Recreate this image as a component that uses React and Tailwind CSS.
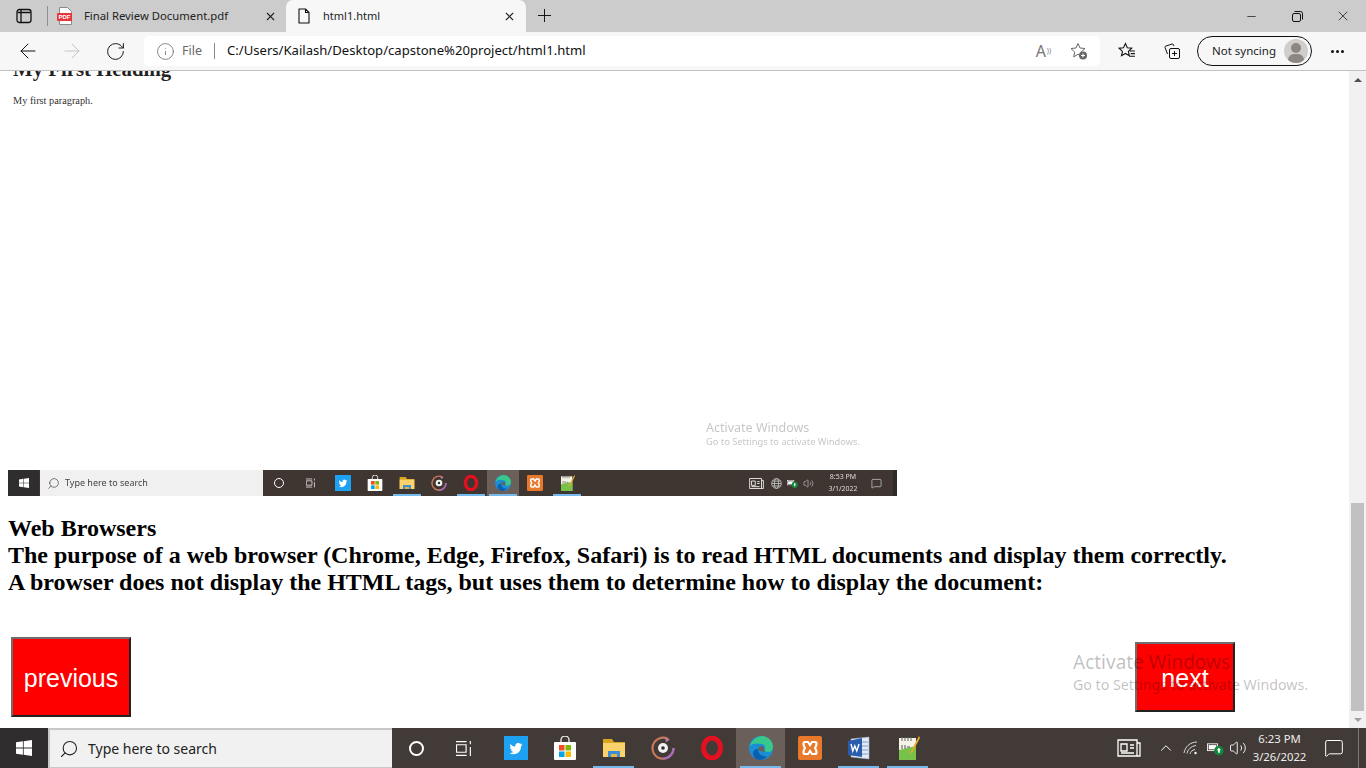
import { ArrowLeft, ArrowRight, RotateCw, Info, X, Plus, Minus, Search, ChevronUp, MessageSquare, Volume2 } from 'lucide-react';

const ui = { fontFamily: '"Noto Sans", "Open Sans", sans-serif' };

// taskbar app icons, all drawn on a 24 box so both taskbars can share them
const Twitter = ({ s }) => (
  <svg width={s} height={s} viewBox="0 0 24 24">
    <rect width="24" height="24" fill="#1da1f2" />
    <path d="M18 8.200c-.5.2-1 .4-1.500.4.5-.3 1-.8 1.200-1.400-.5.300-1.100.5-1.700.6a2.700 2.700 0 0 0-4.600 2.500C9.600 10.700 7.700 9.700 6.400 8c-.7 1.200-.4 2.800.8 3.600-.4 0-.8-.1-1.200-.3 0 1.300.9 2.400 2.200 2.700-.4.100-.8.100-1.200 0 .3 1.100 1.300 1.900 2.500 1.900-1.200.9-2.700 1.300-4.100 1.100 4.900 3 11.700.2 11.600-6.800.5-.4 1-.9 1.400-1.400z" fill="#fff" />
  </svg>
);

const Store = ({ s }) => (
  <svg width={s} height={s} viewBox="0 0 24 24">
    <path d="M8 6V4a4 4 0 0 1 8 0v2" fill="none" stroke="#e8e8e8" strokeWidth="1.400" />
    <rect x="1" y="6" width="22" height="18" rx="1" fill="#fff" />
    <rect x="6" y="9" width="5.500" height="5.500" fill="#f25022" />
    <rect x="12.500" y="9" width="5.500" height="5.500" fill="#7fba00" />
    <rect x="6" y="15.500" width="5.500" height="5.500" fill="#00a4ef" />
    <rect x="12.500" y="15.500" width="5.500" height="5.500" fill="#ffb900" />
  </svg>
);

const Folder = ({ s }) => (
  <svg width={s} height={s} viewBox="0 0 24 24">
    <path d="M1 3h9l2 3h11v15H1z" fill="#d9a520" />
    <path d="M1 7h22v14H1z" fill="#fbd36a" />
    <path d="M6 21v-6h12v6h-3v-3H9v3z" fill="#3a8fd6" />
    <rect x="9" y="18" width="6" height="3" fill="#e9b43c" />
  </svg>
);

const Groove = ({ s }) => (
  <svg width={s} height={s} viewBox="0 0 24 24">
    <path d="M17 3A10.500 10.500 0 1 0 22.500 12" fill="none" stroke="#c9785a" strokeWidth="2.200" />
    <path d="M22.500 12A10.500 10.500 0 0 1 12 22.500" fill="none" stroke="#a66cc0" strokeWidth="2.200" />
    <path d="M14 1l5 2.500-4 3z" fill="#b77a9a" />
    <circle cx="12" cy="12" r="5" fill="#f2f2f2" />
    <circle cx="12" cy="12" r="1.800" fill="#2f2a28" />
  </svg>
);

const Opera = ({ s }) => (
  <svg width={s} height={s} viewBox="0 0 24 24">
    <ellipse cx="12" cy="12" rx="8.500" ry="10" fill="none" stroke="#e3101f" strokeWidth="5" />
  </svg>
);

const Edge = ({ s }) => (
  <svg width={s} height={s} viewBox="0 0 24 24">
    <circle cx="12" cy="12" r="12" fill="#1b8fd6" />
    <path d="M1 10C3 3 9 0 13 0c6 0 11 5 11 11 0 3-2 5-5 5-2 0-4-1-4-2 2-1 2-5-2-6C8 7 3 7 1 10z" fill="#37c98b" />
    <path d="M9 13c0 5 4 8 9 7-2 2.500-4 4-7 4-5 0-7-4-7-7 0-2 2-4 5-4z" fill="#0c5fae" />
    <path d="M10 11c2-2 5-1 5 2 0 1 1 2 2 2-1 .500-6 1-7.500-1-.4-1 0-2 .500-3z" fill="#6b5f5a" />
  </svg>
);

const Xampp = ({ s }) => (
  <svg width={s} height={s} viewBox="0 0 24 24">
    <rect width="24" height="24" rx="2" fill="#e8792b" />
    <path d="M7 6h3l2 3 2-3h3c2 0 2 3 0 6 2 3 2 6 0 6h-3l-2-3-2 3H7c-2 0-2-3 0-6-2-3-2-6 0-6z" fill="none" stroke="#fff" strokeWidth="2.200" />
  </svg>
);

const Word = ({ s }) => (
  <svg width={s} height={s} viewBox="0 0 24 24">
    <path d="M4 3l18-2v22L4 21z" fill="#e4eaf4" stroke="#9db0d0" strokeWidth=".6" />
    <path d="M15 6h6M15 10h6M15 14h6M15 18h6" stroke="#7a9ad0" strokeWidth="1" />
    <path d="M1 5l14-3v19L1 19z" fill="#2a5cae" />
    <path d="M4 8l1.800 7 2-5 2 5L12 8" fill="none" stroke="#fff" strokeWidth="1.400" />
  </svg>
);

const Notepad = ({ s }) => (
  <svg width={s} height={s} viewBox="0 0 24 24">
    <path d="M3 2h17v22H3z" fill="#f4f4e6" />
    <path d="M3 14l17-4v14H3z" fill="#79c24a" />
    <path d="M6 1v4M9 1v4M12 1v4M15 1v4" stroke="#666" strokeWidth="1" />
    <path d="M6 9v4M9 9v4M11 11h3" stroke="#555" strokeWidth="1" />
    <path d="M23 0l-8 15-1.500 3 3-2L24 2z" fill="#e8a92b" />
  </svg>
);

const WinLogo = ({ s }) => (
  <svg width={s} height={s} viewBox="0 0 16 16" fill="#fff">
    <path d="M0 2.300l6.900-1v6.300H0zM7.700 1.200L16 0v7.600H7.700zM0 8.400h6.900v6.300L0 13.700zM7.700 8.400H16V16l-8.300-1.200z" />
  </svg>
);

const TaskView = ({ s }) => (
  <svg width={s} height={s} viewBox="0 0 16 16" fill="none" stroke="#fff" strokeWidth="1.100">
    <path d="M0 1.500h10M0 14.500h10M.5 4.500h9v7h-9zM13.500 1v3M13.500 6.500v8.500" />
  </svg>
);

const News = ({ s }) => (
  <svg width={s} height={s} viewBox="0 0 24 24" fill="none" stroke="#fff" strokeWidth="1.300">
    <path d="M1 4h19v16H1zM20 7h3v13h-3M4 8h6v7H4zM13 9h4M13 12h4M4 17h13" />
  </svg>
);

const Wifi = ({ s }) => (
  <svg width={s} height={s} viewBox="0 0 16 16" fill="none" stroke="#ddd" strokeWidth="1">
    <path d="M1 13C2 7 7 2 14 2M4 13.500C4.500 10 8 6 13 5.500M7 14c.3-2 2-4 5-4.500" />
    <circle cx="12.500" cy="13" r="1.200" fill="#fff" stroke="none" />
  </svg>
);

const Battery = ({ s }) => (
  <svg width={s} height={s} viewBox="0 0 20 16">
    <rect x="0.500" y="2.500" width="12" height="8" fill="none" stroke="#fff" />
    <rect x="2" y="4" width="9" height="5" fill="#fff" />
    <circle cx="14" cy="10.500" r="5.500" fill="#10893e" />
    <path d="M14 7l2.500 3H15v3h-2v-3h-1.500z" fill="#fff" />
  </svg>
);

const Globe = ({ s }) => (
  <svg width={s} height={s} viewBox="0 0 16 16" fill="none" stroke="#ddd" strokeWidth="1">
    <circle cx="8" cy="8" r="7" />
    <ellipse cx="8" cy="8" rx="3" ry="7" />
    <path d="M1 8h14M2 4.500h12M2 11.500h12" />
  </svg>
);

function Cell({ size, active, bar, width, children }) {
  return (
    <div className={`relative h-full flex items-center justify-center shrink-0 ${active ? 'bg-[#6b5f5a]' : ''}`} style={{ width }}>
      {children}
      {bar && <div className="absolute bottom-0 h-[2px] bg-[#76b9ed]" style={{ left: (width - size * 1.700) / 2, width: size * 1.700 }} />}
    </div>
  );
}

function MiniTaskbar() {
  const apps = [
    [Twitter, false, false],
    [Store, false, false],
    [Folder, true, false],
    [Groove, false, false],
    [Opera, true, false],
    [Edge, true, true],
    [Xampp, false, false],
    [Notepad, true, false],
  ];
  return (
    <div className="h-[26px] w-[889px] flex items-center bg-[#3f3631] text-white blur-[0.3px]" style={ui}>
      <div className="w-[31px] h-full bg-[#2f2d2d] flex items-center justify-center"><WinLogo s={10} /></div>
      <div className="w-[223px] h-full ml-[1px] bg-[#f0f0f0] flex items-center text-[#444] text-[9px] pl-[7px] gap-[5px]">
        <Search size={13} className="-scale-x-100" strokeWidth={1.300} />
        <span>Type here to search</span>
      </div>
      <Cell width={31}><div className="w-[10px] h-[10px] rounded-full border-[1.500px] border-white" /></Cell>
      <Cell width={33}><TaskView s={10} /></Cell>
      {apps.map(([Icon, bar, active], i) => (
        <Cell key={i} width={32} size={16} bar={bar} active={active}><Icon s={16} /></Cell>
      ))}
      <div className="flex-1" />
      <News s={15} />
      <div className="w-[7px]" />
      <Globe s={11} />
      <div className="w-[5px]" />
      <Battery s={11} />
      <div className="w-[5px]" />
      <Volume2 size={11} strokeWidth={1.200} color="#ddd" />
      <div className="w-[12px] flex-none" />
      <div className="text-[7px] leading-[12px] text-center text-[#ddd] w-[34px]">
        <div>8:53 PM</div>
        <div>3/1/2022</div>
      </div>
      <div className="w-[33px] flex items-center justify-center"><MessageSquare size={11} strokeWidth={1.200} /></div>
      <div className="w-[4px] h-full bg-[#2e2a27]" />
    </div>
  );
}

function Taskbar() {
  const apps = [
    [Twitter, 24, false, false],
    [Store, 24, false, false],
    [Folder, 24, true, false],
    [Groove, 24, false, false],
    [Opera, 24, false, false],
    [Edge, 24, true, true],
    [Xampp, 24, false, false],
    [Word, 24, true, false],
    [Notepad, 24, true, false],
  ];
  return (
    <div className="h-[40px] flex bg-[#423a36] text-white shrink-0" style={ui}>
      <div className="w-[48px] bg-[#2f2d2d] flex items-center justify-center"><WinLogo s={16} /></div>
      <div className="w-[344px] bg-[#f1f1f1] border-2 border-b-[1px] border-[#c8c8c8] border-r-0 flex items-center text-[#222] text-[14px] pl-[9px] gap-[9px]">
        <Search size={20} className="-scale-x-100" strokeWidth={1.300} />
        <span>Type here to search</span>
      </div>
      <Cell width={49}><div className="w-[15px] h-[15px] rounded-full border-2 border-white" /></Cell>
      <Cell width={50}><div className="mr-[4px]"><TaskView s={17} /></div></Cell>
      {apps.map(([Icon, s, bar, active], i) => (
        <Cell key={i} width={49} size={s} bar={bar} active={active}><Icon s={s} /></Cell>
      ))}
      <div className="flex-1" />
      <div className="w-[26px] flex items-center justify-center"><News s={24} /></div>
      <div className="w-[12px]" />
      <div className="w-[24px] flex items-center justify-center"><ChevronUp size={18} strokeWidth={1.300} /></div>
      <div className="w-[25px] flex items-center justify-center"><Wifi s={16} /></div>
      <div className="w-[24px] flex items-center justify-center"><Battery s={17} /></div>
      <div className="w-[22px] flex items-center justify-center"><Volume2 size={18} strokeWidth={1.200} /></div>
      <div className="w-[61px] text-center text-[11.300px] leading-[18px] pt-[2px] text-[#eee]">
        <div>6:23 PM</div>
        <div>3/26/2022</div>
      </div>
      <div className="w-[48px] flex items-center justify-center"><MessageSquare size={20} strokeWidth={1.200} /></div>
      <div className="w-[8px] border-l border-[#777]" />
    </div>
  );
}

const SidebarIcon = () => (
  <svg width="16" height="16" viewBox="0 0 16 16" fill="none" stroke="#111" strokeWidth="1.300">
    <rect x="1" y="1.500" width="14" height="13" rx="2.500" />
    <path d="M5 2v12" />
    <path d="M1.500 4.500h13" strokeWidth="1.500" />
  </svg>
);

const PdfIcon = () => (
  <svg width="16" height="18" viewBox="0 0 16 18">
    <path d="M2.500.500h8l4 4v13h-12z" fill="#fff" stroke="#8a8a8a" />
    <rect x="0" y="6" width="15" height="8" rx="1" fill="#e8343a" />
    <text x="7.500" y="12.300" fontSize="6" fontWeight="700" fill="#fff" textAnchor="middle" fontFamily="Liberation Sans">PDF</text>
  </svg>
);

const PageIcon = () => (
  <svg width="12" height="16" viewBox="0 0 12 16" fill="none" stroke="#111" strokeWidth="1.100">
    <path d="M1 1h6.500L11 4.500V15H1zM7.500 1v3.500H11" strokeLinejoin="round" />
  </svg>
);

function TabBar() {
  return (
    <div className="h-[32px] bg-[#cccccc] flex text-[11.300px] text-[#222] shrink-0" style={ui}>
      <div className="w-[47px] flex items-center justify-center pl-[1px]"><SidebarIcon /></div>
      <div className="w-px h-[20px] mt-[6px] bg-[#8e8e8e]" />
      <div className="w-[238px] flex items-center pl-[9px] pr-[9px]">
        <PdfIcon />
        <span className="ml-[11px] flex-1">Final Review Document.pdf</span>
        <X size={13} strokeWidth={2} color="#222" />
      </div>
      <div className="w-[240px] bg-[#f7f7f7] rounded-t-[7px] flex items-center pl-[12px] pr-[10px]">
        <PageIcon />
        <span className="ml-[13px] flex-1 text-[11px]">html1.html</span>
        <X size={13} strokeWidth={2} color="#222" />
      </div>
      <div className="w-[36px] flex items-center justify-center pb-[1px]"><Plus size={21} strokeWidth={1.100} color="#111" /></div>
      <div className="flex-1" />
      <div className="w-[46px] flex items-center justify-center"><Minus size={13} strokeWidth={1.300} color="#111" /></div>
      <div className="w-[46px] flex items-center justify-center">
        <svg width="11" height="11" viewBox="0 0 11 11" fill="none" stroke="#111">
          <rect x=".5" y="2.500" width="8" height="8" rx="1.500" />
          <path d="M2.500 .5h6a2 2 0 0 1 2 2v6" />
        </svg>
      </div>
      <div className="w-[46px] flex items-center justify-center"><X size={16} strokeWidth={1.100} color="#111" /></div>
    </div>
  );
}

function Toolbar() {
  return (
    <div className="h-[39px] bg-[#f7f7f7] border-b border-[#c2c2c2] flex items-start text-[12.500px] shrink-0" style={ui}>
      <div className="w-[56px] h-[38px] flex items-center justify-center"><ArrowLeft size={24} strokeWidth={1} color="#111" /></div>
      <div className="w-[32px] h-[38px] flex items-center justify-center"><ArrowRight size={24} strokeWidth={1} color="#c4c4c4" /></div>
      <div className="w-[56px] h-[38px] flex items-center justify-center pr-[2px]"><RotateCw size={21} strokeWidth={1.100} color="#111" /></div>
      <div className="w-[956px] h-[30px] mt-[4px] bg-white rounded-[5px] flex items-center pl-[12px]">
        <Info size={19} strokeWidth={1} color="#666" />
        <span className="ml-[7px] text-[#666]">File</span>
        <div className="w-px h-[16px] bg-[#888] ml-[12px]" />
        <span className="ml-[12px] text-[#111] flex-1 text-[13.100px]">C:/Users/Kailash/Desktop/capstone%20project/html1.html</span>
        <span className="text-[#777] text-[16px] leading-[20px] relative mr-[24px]">A<span className="absolute text-[7px] -right-[5px] top-[0px]">))</span></span>
        <svg className="mr-[12px]" width="18" height="18" viewBox="0 0 18 18" fill="none" stroke="#666" strokeWidth="1">
          <path d="M8 1.500l2 4.500 5 .5-3.700 3.300 1 4.700L8 12.300l-4.300 2.500 1-4.700L1 6.500 6 6z" />
          <circle cx="13" cy="13.500" r="4" fill="#666" stroke="none" />
          <path d="M13 11.500v4M11 13.500h4" stroke="#fff" />
        </svg>
      </div>
      <div className="w-[54px] h-[38px] flex items-center justify-center pr-[1px]">
        <svg width="18" height="18" viewBox="0 0 17 17" fill="none" stroke="#111" strokeWidth="1">
          <path d="M7 1.500l1.800 4 4.200.4-3.200 2.900.9 4.200L7 10.800l-3.700 2.200.9-4.200L1 5.900l4.200-.4zM11 8.500h5M12 11h4M10.500 13.500h5.500" />
        </svg>
      </div>
      <div className="w-[36px] h-[38px] flex items-center justify-center">
        <svg width="18" height="18" viewBox="0 0 18 18" fill="none" stroke="#111" strokeWidth="1">
          <rect x="6.500" y="6.500" width="10" height="10" rx="1.500" />
          <path d="M11.500 9v5M9 11.500h5M4.500 12L2 5.500q-.3-1 .8-1.400L9 2q1-.3 1.500.8L11 4" />
        </svg>
      </div>
      <div className="w-[115px] h-[30px] mt-[4px] ml-[7px] rounded-full border border-[#111] flex items-center pl-[14px] text-[11.500px] text-[#222]">
        <span className="flex-1">Not syncing</span>
        <div className="w-[24px] h-[24px] mr-[3px] rounded-full bg-[#d0cdca] overflow-hidden relative">
          <div className="absolute left-[7px] top-[4px] w-[10px] h-[10px] rounded-full bg-[#8a8784]" />
          <div className="absolute left-[4px] top-[15px] w-[16px] h-[12px] rounded-full bg-[#8a8784]" />
        </div>
      </div>
      <div className="flex-1 h-[38px] flex items-center justify-center gap-[2px] pr-[3px]">
        <div className="w-[3px] h-[3px] rounded-full bg-[#111]" />
        <div className="w-[3px] h-[3px] rounded-full bg-[#111]" />
        <div className="w-[3px] h-[3px] rounded-full bg-[#111]" />
      </div>
    </div>
  );
}

function Scrollbar() {
  return (
    <div className="w-[17px] bg-[#f1f1f1] flex flex-col items-center shrink-0">
      <div className="h-[17px] flex items-center justify-center">
        <div className="w-0 h-0 border-x-[4px] border-x-transparent border-b-[4px] border-b-[#505050]" />
      </div>
      <div className="flex-1 w-full flex flex-col justify-end px-[2px]">
        <div className="h-[208px] bg-[#c1c1c1]" />
      </div>
      <div className="h-[17px] flex items-center justify-center">
        <div className="w-0 h-0 border-x-[4px] border-x-transparent border-t-[4px] border-t-[#a0a0a0]" />
      </div>
    </div>
  );
}

export default function App() {
  return (
    <div className="w-[1366px] h-[768px] flex flex-col overflow-hidden bg-white">
      <TabBar />
      <Toolbar />
      <div className="flex-1 flex min-h-0">
        <div className="flex-1 relative overflow-hidden">
          <div className="ml-[8px] w-[889px] h-[425px] flex flex-col">
            <div className="text-[20.800px] leading-[24px] font-bold text-[#222] -mt-[14px] ml-[5px]" style={{ fontFamily: '"Liberation Serif", serif' }}>My First Heading</div>
            <div className="text-[10.300px] leading-[12px] text-[#333] mt-[14px] ml-[5px]" style={{ fontFamily: '"Liberation Serif", serif' }}>My first paragraph.</div>
            <div className="flex-1" />
            <div className="ml-[698px] mb-[22px] text-[#c8c8c8] blur-[0.2px]" style={ui}>
              <div className="text-[12.500px] leading-[16px]">Activate Windows</div>
              <div className="text-[9.300px] leading-[12px]">Go to Settings to activate Windows.</div>
            </div>
            <MiniTaskbar />
          </div>
          <div className="mt-[19px] ml-[8px] font-bold text-[24px] leading-[27px] text-black" style={{ fontFamily: '"Liberation Serif", serif' }}>
            <div>Web Browsers</div>
            <div>The purpose of a web browser (Chrome, Edge, Firefox, Safari) is to read HTML documents and display them correctly.</div>
            <div>A browser does not display the HTML tags, but uses them to determine how to display the document:</div>
          </div>
          <div className="mt-[41px] flex items-center justify-between pl-[11px] pr-[114px]" style={{ fontFamily: '"Liberation Sans", sans-serif' }}>
            <button className="w-[120px] h-[80px] pt-[3px] bg-[#ff0000] text-white text-[25px] border-2 border-t-[#6e6e6e] border-l-[#6e6e6e] border-r-[#222] border-b-[#222]">previous</button>
            <button className="w-[100px] h-[70px] pt-[3px] bg-[#ff0000] text-white text-[25px] border-2 border-t-[#6e6e6e] border-l-[#6e6e6e] border-r-[#222] border-b-[#222]">next</button>
          </div>
          <div className="absolute left-[1073px] top-[578px] text-black/25 pointer-events-none" style={ui}>
            <div className="text-[19px] leading-[26px]">Activate Windows</div>
            <div className="text-[14.200px] leading-[20px]">Go to Settings to activate Windows.</div>
          </div>
        </div>
        <Scrollbar />
      </div>
      <Taskbar />
    </div>
  );
}
